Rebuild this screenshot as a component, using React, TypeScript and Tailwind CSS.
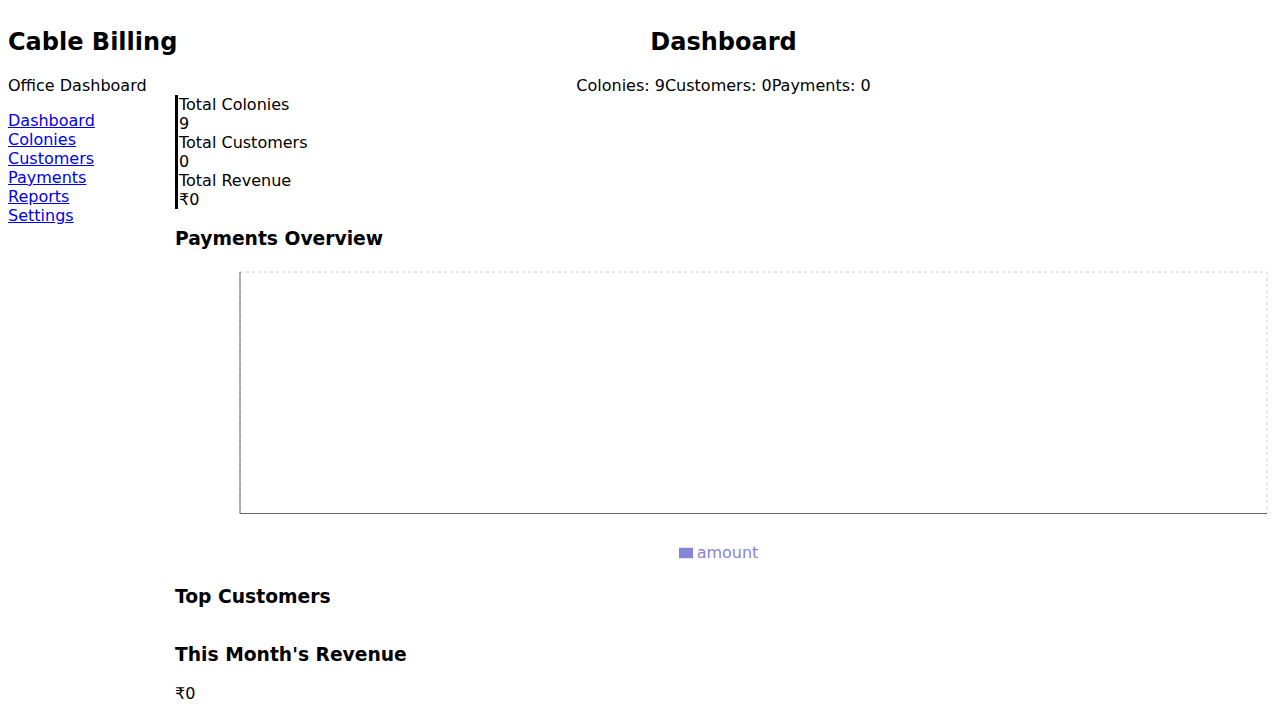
const navLinks = ['Dashboard', 'Colonies', 'Customers', 'Payments', 'Reports', 'Settings'];

const stats: { label: string; value: string }[] = [
  { label: 'Total Colonies', value: '9' },
  { label: 'Total Customers', value: '0' },
  { label: 'Total Revenue', value: '₹0' },
];

// empty bar chart: grid box, axes and legend only (no data yet)
function PaymentsChart() {
  const w = 1097;
  const left = 65;
  const right = w - 5;
  const top = 5;
  const bottom = 246.5;
  return (
    <div className="h-[300px] w-full flex flex-col">
      <svg width={w} height={276} className="block">
        <line x1={left} y1={top} x2={right} y2={top} stroke="#ccc" strokeDasharray="3 3" />
        <line x1={left} y1={bottom} x2={right} y2={bottom} stroke="#ccc" strokeDasharray="3 3" />
        <line x1={left} y1={top} x2={left} y2={bottom} stroke="#ccc" strokeDasharray="3 3" />
        <line x1={right} y1={top} x2={right} y2={bottom} stroke="#ccc" strokeDasharray="3 3" />
        <line x1={left} y1={top} x2={left} y2={bottom} stroke="#666" />
        <line x1={left} y1={bottom} x2={right} y2={bottom} stroke="#666" />
      </svg>
      <div className="flex justify-center leading-[normal]">
        <div className="flex items-center mr-[10px] text-[#8884d8]">
          <svg width={14} height={14} viewBox="0 0 32 32" className="mr-[4px]">
            <path d="M0,4h32v24h-32z" fill="#8884d8" />
          </svg>
          <span>amount</span>
        </div>
      </div>
    </div>
  );
}

export default function App() {
  return (
    <div className="flex p-[8px] bg-white text-black text-[16px] leading-[normal] font-['DejaVu_Sans',sans-serif] min-h-[720px]">
      <aside className="w-[167px] shrink-0 whitespace-nowrap">
        <h2 className="my-[19.92px] text-[24px] font-bold leading-[normal]">Cable Billing</h2>
        <p className="my-[16px]">Office Dashboard</p>
        <ul className="my-[16px] list-none p-0">
          {navLinks.map((l) => (
            <li key={l}>
              <a href="#" className="text-[#0000ee] underline">{l}</a>
            </li>
          ))}
        </ul>
      </aside>

      <main className="flex-1 min-w-0">
        <h2 className="my-[19.92px] text-[24px] font-bold leading-[normal] text-center">Dashboard</h2>
        <div className="text-center">
          <span>Colonies: 9</span>
          <span>Customers: 0</span>
          <span>Payments: 0</span>
        </div>

        <div>
          {stats.map((s) => (
            <div key={s.label} className="border-l-[3px] border-black pl-px">
              <div>{s.label}</div>
              <div>{s.value}</div>
            </div>
          ))}
        </div>

        <h3 className="my-[18.72px] text-[18.72px] font-bold leading-[normal]">Payments Overview</h3>
        <PaymentsChart />

        <h3 className="mt-[18.72px] mb-[37.44px] text-[18.72px] font-bold leading-[normal]">Top Customers</h3>

        <h3 className="my-[18.72px] text-[18.72px] font-bold leading-[normal]">This Month's Revenue</h3>
        <p className="my-[16px]">₹0</p>
      </main>
    </div>
  );
}
